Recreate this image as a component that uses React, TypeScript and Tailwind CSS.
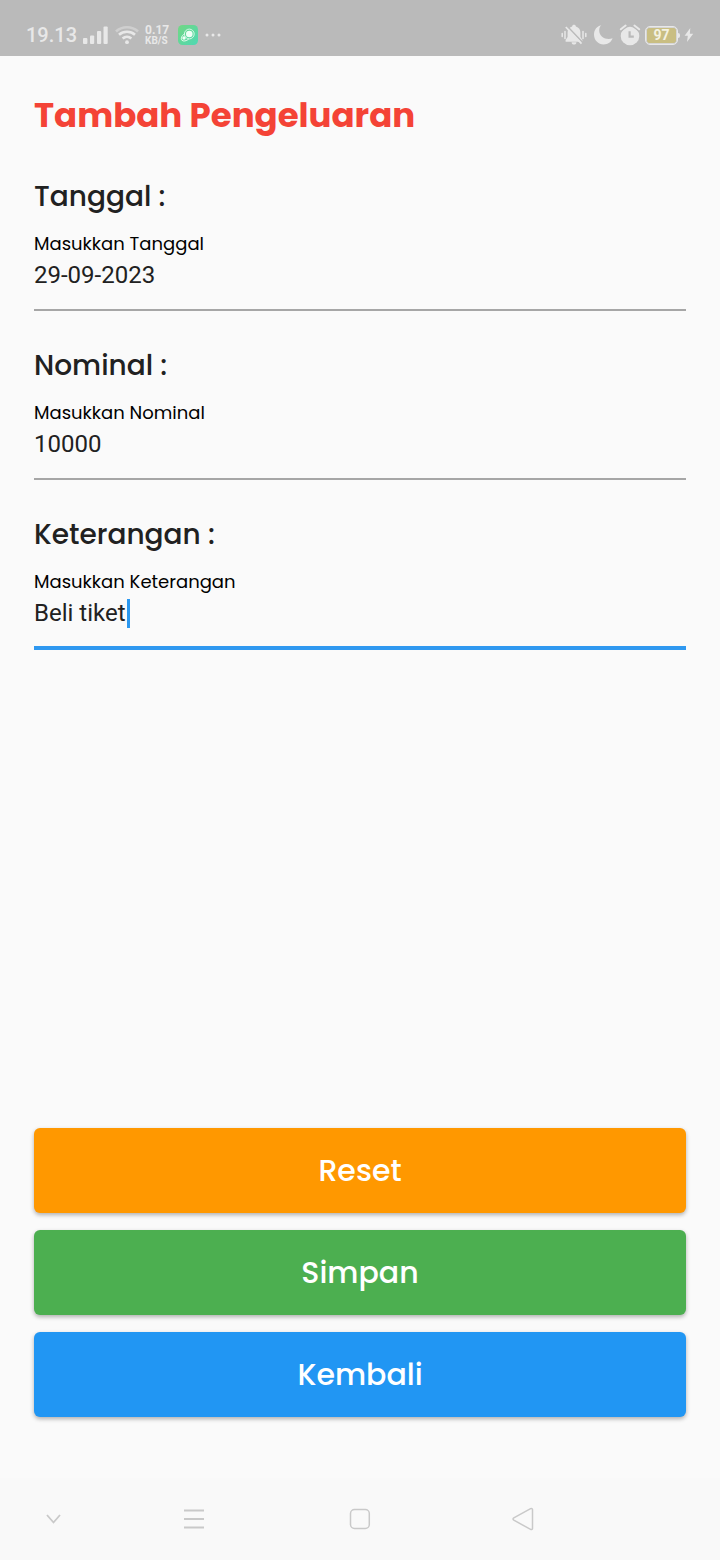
import { useState } from "react";
import type { ReactNode } from "react";

const poppins = "font-[Poppins,Inter,sans-serif]";

function StatusBar() {
  return (
    <header className="flex h-14 items-end justify-between bg-[#bababa] px-[26px] pb-2 font-[Roboto,sans-serif] text-[#e8e8e8]">
      <div className="flex h-[26px] items-center">
        <span className="text-[20px] leading-[26px] font-medium">19.13</span>
        <svg className="ml-[6px] h-5 w-[26px]" viewBox="0 0 26 20" fill="currentColor" aria-hidden="true">
          <rect x="0" y="13" width="4.400" height="6" rx="1" />
          <rect x="7" y="10.500" width="4.200" height="8.500" rx="1" />
          <rect x="14" y="6" width="4.200" height="13" rx="1" />
          <rect x="20.500" y="1.500" width="4.200" height="17.500" rx="1" />
        </svg>
        <svg className="ml-[6px] h-5 w-6" viewBox="0 0 24 20" fill="none" strokeWidth="2.600" aria-hidden="true">
          <path d="M1 6.500C7 .8 17 .8 23 6.500" stroke="#cfcfcf" />
          <path d="M4 9.800c4.500-4 11.500-4 16 0" stroke="currentColor" />
          <path d="M7.600 13.400c2.600-2.200 6.200-2.200 8.800 0" stroke="currentColor" />
          <circle cx="12" cy="17.200" r="1.900" fill="currentColor" />
        </svg>
        <span className="ml-[6px] flex w-[27px] flex-col font-bold">
          <span className="text-[12px] leading-[11px]">0.17</span>
          <span className="text-[10px] leading-[9px]">KB/S</span>
        </span>
        <svg className="ml-[6px] size-5" viewBox="0 0 20 20" aria-hidden="true">
          <defs>
            <linearGradient id="app-badge" x1="0" y1="0" x2="1" y2="1">
              <stop offset="0" stopColor="#72d783" />
              <stop offset="1" stopColor="#4ed8b4" />
            </linearGradient>
          </defs>
          <rect width="20" height="20" rx="4.500" fill="url(#app-badge)" />
          <circle cx="11.300" cy="9" r="4.900" fill="none" stroke="#effff6" strokeWidth=".8" />
          <circle cx="11.300" cy="9" r="3.300" fill="#effff6" />
          <circle cx="6" cy="13" r="1.700" fill="#effff6" />
          <path d="M6.400 8.800C3.500 11 2.700 13.500 3.800 15.200c1.500 1.400 4.500 1 7-1.200" fill="none" stroke="#effff6" strokeWidth=".9" />
        </svg>
        <svg className="ml-[7px] h-5 w-4" viewBox="0 0 16 20" fill="currentColor" aria-hidden="true">
          <circle cx="2" cy="10" r="1.500" />
          <circle cx="8" cy="10" r="1.500" />
          <circle cx="14" cy="10" r="1.500" />
        </svg>
      </div>

      <div className="flex h-[26px] items-center">
        <svg className="h-[22px] w-[26px]" viewBox="0 0 26 22" fill="currentColor" aria-hidden="true">
          <path d="M13 .8c-1 0-1.800.700-1.900 1.600C8 3.200 6.600 5.600 6.600 8.500V13l-2 3v1.700h16.800V16l-2-3V8.500c0-2.900-1.500-5.300-4.500-6.100C14.800 1.500 14 .8 13 .8zM10.600 18.300h4.800c0 1.400-1 2.300-2.400 2.300s-2.400-.9-2.400-2.300z" />
          <path d="M6 2 21.500 18.300" stroke="#bababa" strokeWidth="1.600" />
          <path d="M4.800 3 20.500 19.600" stroke="currentColor" strokeWidth="1.700" />
          <path d="M1.200 9.500v3M4 7.500v7M22 7.500v7M24.800 9.500v3" stroke="currentColor" strokeWidth="1.500" strokeLinecap="round" />
        </svg>
        <svg className="ml-[6px] h-[22px] w-5" viewBox="0 0 20 22" fill="currentColor" aria-hidden="true">
          <path d="M8.200 1.200C3.600 2.300 1 6 1 10.500 1 16.300 5.300 20.400 10.600 20.400c4.300 0 7.700-2.400 9-6.200-5.800 2.600-13.400-1.200-13.400-7.700 0-2.200.7-3.900 2-5.300z" />
        </svg>
        <svg className="ml-[6px] size-[22px]" viewBox="0 0 22 22" fill="currentColor" aria-hidden="true">
          <circle cx="11" cy="12" r="9.300" />
          <path d="M1.800 5.300 6.600 1.500M20.200 5.300l-4.800-3.800" stroke="#bababa" strokeWidth="4.500" strokeLinecap="round" />
          <path d="M1.800 5.300 6.600 1.500M20.200 5.300l-4.800-3.800" stroke="currentColor" strokeWidth="2" strokeLinecap="round" />
          <path d="M10.600 7.200v5.400h4.200" fill="none" stroke="#bababa" strokeWidth="2.200" />
        </svg>
        <span className="ml-1 flex h-[19px] w-[33px] items-center justify-center rounded-[5px] border border-[#e8e8e8] p-px ring-1 ring-[#d6d6d6] ring-inset">
          <span className="flex h-full w-full items-center justify-center rounded-[3px] bg-[#c9be82] text-[14px] leading-[14px] font-bold text-[#f4f2e2]">
            97
          </span>
        </span>
        <span className="h-[5px] w-[2px] rounded-r-sm bg-[#e8e8e8]" />
        <svg className="ml-1 h-4 w-[10px]" viewBox="0 0 10 16" fill="currentColor" aria-hidden="true">
          <path d="M6.300 1 .6 8.800h3.200L3 15l6.200-8.200H5.800z" />
        </svg>
      </div>
    </header>
  );
}

type FieldProps = {
  id: string;
  title: string;
  label: string;
  value: string;
  onChange: (value: string) => void;
  active?: boolean;
};

function Field({ id, title, label, value, onChange, active = false }: FieldProps) {
  return (
    <section className="flex h-[169px] flex-col">
      <h2 className={`${poppins} text-[28px] leading-[42px] font-medium text-[#212121]`}>{title}</h2>
      <label htmlFor={id} className={`${poppins} mt-3 text-[18px] leading-[28px] text-black`}>
        {label}
      </label>
      <div className="relative">
        <input
          id={id}
          value={value}
          onChange={(event) => onChange(event.target.value)}
          className={`block w-full bg-transparent pt-[3px] font-[Roboto,sans-serif] text-[24px] leading-[28px] text-[#212121] caret-[#2196f3] outline-none ${
            active ? "border-b-4 border-[#2f98f0] pb-[19px]" : "border-b-2 border-[#a6a6a6] pb-5"
          }`}
        />
        {active && <span className="absolute top-[3px] left-[93px] h-[29px] w-[3px] bg-[#2b98f0]" />}
      </div>
    </section>
  );
}

function ActionButton({ className, children, onClick }: { className: string; children: ReactNode; onClick?: () => void }) {
  return (
    <button
      type="button"
      onClick={onClick}
      className={`${poppins} h-[85px] w-full rounded-md text-[30px] leading-[44px] font-medium text-white shadow-[0_2px_4px_rgba(0,0,0,0.3)] ${className}`}
    >
      {children}
    </button>
  );
}

function NavigationBar() {
  const button = "flex size-12 items-center justify-center";
  return (
    <nav className="flex h-[82px] items-center bg-[#f9f9f9] pl-[29px] text-[#c9c9c9]">
      <button type="button" aria-label="Hide keyboard" className={button}>
        <svg className="size-6" viewBox="0 0 24 24" fill="none" stroke="currentColor" strokeWidth="1.800">
          <path d="m6 8 6.500 7.500L19 8" />
        </svg>
      </button>
      <div className="ml-[93px] flex w-[378px] items-center justify-between">
        <button type="button" aria-label="Recent apps" className={button}>
          <svg className="size-6" viewBox="0 0 24 24" fill="none" stroke="currentColor" strokeWidth="1.800">
            <path d="M2 3.500h20M2 12h20M2 20.500h20" />
          </svg>
        </button>
        <button type="button" aria-label="Home" className={button}>
          <svg className="size-6" viewBox="0 0 24 24" fill="none" stroke="currentColor" strokeWidth="1.500">
            <rect x="3.500" y="2.600" width="18.800" height="18.800" rx="4" />
          </svg>
        </button>
        <button type="button" aria-label="Back" className={button}>
          <svg className="size-6" viewBox="0 0 24 24" fill="none" stroke="currentColor" strokeWidth="1.500" strokeLinejoin="round">
            <path d="M1.800 10.800 18.600 1.600c1-.5 1.900 0 1.900 1v18.800c0 1-.9 1.500-1.900 1L1.800 13.200c-1-.6-1-1.800 0-2.400z" />
          </svg>
        </button>
      </div>
    </nav>
  );
}

export default function App() {
  const [date, setDate] = useState("29-09-2023");
  const [amount, setAmount] = useState("10000");
  const [note, setNote] = useState("Beli tiket");

  const reset = () => {
    setDate("");
    setAmount("");
    setNote("");
  };

  return (
    <div className="flex min-h-screen flex-col bg-[#fafafa]">
      <StatusBar />
      <main className="flex flex-1 flex-col px-[34px] pt-[34px] pb-[61px]">
        <h1 className={`${poppins} text-[34px] leading-[50px] font-bold text-[#f44336]`}>Tambah Pengeluaran</h1>
        <form className="mt-9 flex flex-col">
          <Field id="date" title="Tanggal :" label="Masukkan Tanggal" value={date} onChange={setDate} />
          <Field id="amount" title="Nominal :" label="Masukkan Nominal" value={amount} onChange={setAmount} />
          <Field id="note" title="Keterangan :" label="Masukkan Keterangan" value={note} onChange={setNote} active />
        </form>
        <div className="mt-auto flex flex-col gap-[17px]">
          <ActionButton className="bg-[#ff9800]" onClick={reset}>Reset</ActionButton>
          <ActionButton className="bg-[#4caf50]">Simpan</ActionButton>
          <ActionButton className="bg-[#2196f3]">Kembali</ActionButton>
        </div>
      </main>
      <NavigationBar />
    </div>
  );
}
